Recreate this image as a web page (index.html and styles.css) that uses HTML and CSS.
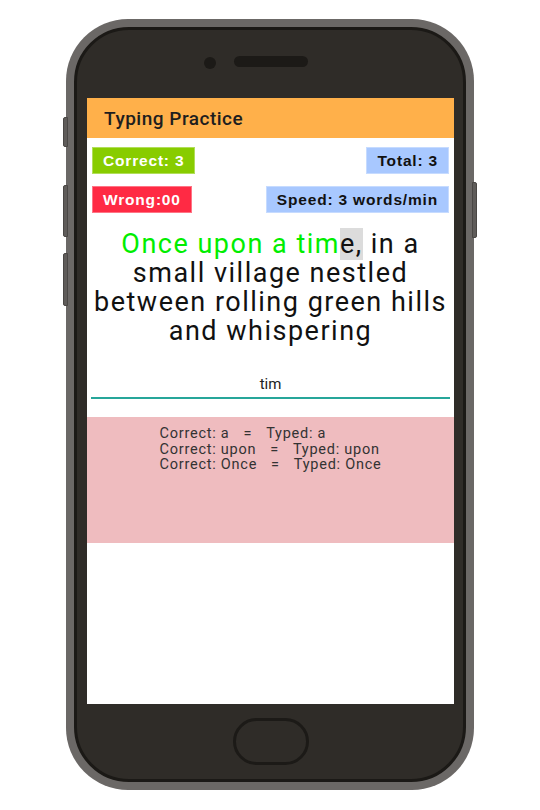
FILE: index.html
```html
<!DOCTYPE html>
<html lang="en">
<head>
<meta charset="utf-8">
<title>Typing Practice</title>
<link rel="stylesheet" href="styles.css">
</head>
<body>
<div class="stage">
  <div class="phone">
    <span class="side-btn left b1"></span>
    <span class="side-btn left b2"></span>
    <span class="side-btn left b3"></span>
    <span class="side-btn right b4"></span>
    <div class="bezel">
      <div class="top">
        <span class="camera"></span>
        <span class="speaker"></span>
        <span></span>
      </div>
      <div class="screen">
        <header class="appbar">Typing Practice</header>
        <div class="stats">
          <div class="row">
            <span class="badge green">Correct: 3</span>
            <span class="badge blue">Total: 3</span>
          </div>
          <div class="row">
            <span class="badge red">Wrong:00</span>
            <span class="badge blue">Speed: 3 words/min</span>
          </div>
        </div>
        <p class="passage"><span class="done">Once upon a tim</span><span class="cursor">e,</span> in a small village nestled between rolling green hills and whispering</p>
        <div class="input">tim</div>
        <div class="log">
          <div class="log-lines">
            <div>Correct: a<span class="eq">=</span>Typed: a</div>
            <div>Correct: upon<span class="eq">=</span>Typed: upon</div>
            <div>Correct: Once<span class="eq">=</span>Typed: Once</div>
          </div>
        </div>
      </div>
      <div class="bottom">
        <span class="home"></span>
      </div>
    </div>
  </div>
</div>
</body>
</html>
```
FILE: styles.css
```css
* { box-sizing: border-box; }
html, body { margin: 0; padding: 0; background: #fff; }
body { font-family: Roboto, "Liberation Sans", sans-serif; }

.stage {
  width: 540px;
  height: 810px;
  padding: 19px 0 0 66px;
}

.phone {
  position: relative;
  width: 408px;
  height: 771px;
  background: #6b6866;
  border-radius: 62px;
  padding: 8px;
}

.side-btn {
  position: absolute;
  width: 5px;
  background: #5f5c5a;
  border: 1px solid #4a4745;
}
.side-btn.left { left: -3px; border-radius: 2px 0 0 2px; }
.side-btn.right { right: -3px; border-radius: 0 2px 2px 0; }
.b1 { top: 98px; height: 30px; }
.b2 { top: 166px; height: 52px; }
.b3 { top: 234px; height: 53px; }
.b4 { top: 163px; height: 56px; }

.bezel {
  height: 100%;
  background: #2f2c28;
  border: 3px solid #1b1916;
  border-radius: 55px;
  padding: 0 9px 0 10px;
  display: flex;
  flex-direction: column;
}

.top {
  height: 68px;
  display: grid;
  grid-template-columns: 1fr auto 1fr;
  align-items: center;
  padding-bottom: 5px;
}
.camera {
  justify-self: end;
  width: 12px;
  height: 12px;
  border-radius: 50%;
  background: #1c1a17;
  margin-right: 18px;
  margin-top: 2px;
}
.speaker {
  width: 74px;
  height: 11px;
  border-radius: 6px;
  background: #1c1a17;
}

.screen {
  height: 606px;
  background: #fff;
  display: flex;
  flex-direction: column;
}

.appbar {
  height: 40px;
  background: #ffb04a;
  color: #1e1e1e;
  font-size: 19px;
  font-weight: 500;
  letter-spacing: 0.5px;
  padding-left: 17px;
  display: flex;
  align-items: center;
}

.stats {
  padding: 9px 5px 0;
  display: flex;
  flex-direction: column;
  gap: 12px;
}
.row {
  display: flex;
  justify-content: space-between;
}
.badge {
  height: 27px;
  padding: 0 10px;
  display: flex;
  align-items: center;
  white-space: nowrap;
  font-family: "Liberation Sans", Arial, sans-serif;
  font-weight: bold;
  font-size: 15.5px;
  letter-spacing: 0.82px;
  border: 1px solid rgba(255,255,255,0.35);
}
.badge.green { background: #88cc00; color: #fff; }
.badge.red { background: #ff2a44; color: #fff; }
.badge.blue { background: #a8c8ff; color: #111; }

.passage {
  margin: 17px 4px 0;
  text-align: center;
  font-size: 27px;
  line-height: 29px;
  letter-spacing: 1.5px;
  color: #111;
}
.done { color: #00ee00; }
.cursor { background: #dcdcdc; }

.input {
  margin: 12px 4px 0;
  height: 41px;
  border-bottom: 2px solid #26a69a;
  text-align: center;
  font-size: 15px;
  color: #222;
  padding-top: 17px;
}

.log {
  margin-top: 18px;
  height: 126px;
  background: #efbcbf;
  display: flex;
  justify-content: center;
  padding-top: 9px;
}
.log-lines {
  font-size: 14.5px;
  line-height: 15.5px;
  letter-spacing: 0.75px;
  color: #333;
}
.eq { white-space: pre; padding: 0 14px; }

.bottom {
  flex: 1;
  display: flex;
  justify-content: center;
  padding-top: 14px;
}
.home {
  width: 76px;
  height: 47px;
  border: 3px solid #1c1a17;
  border-radius: 24px;
}
```
